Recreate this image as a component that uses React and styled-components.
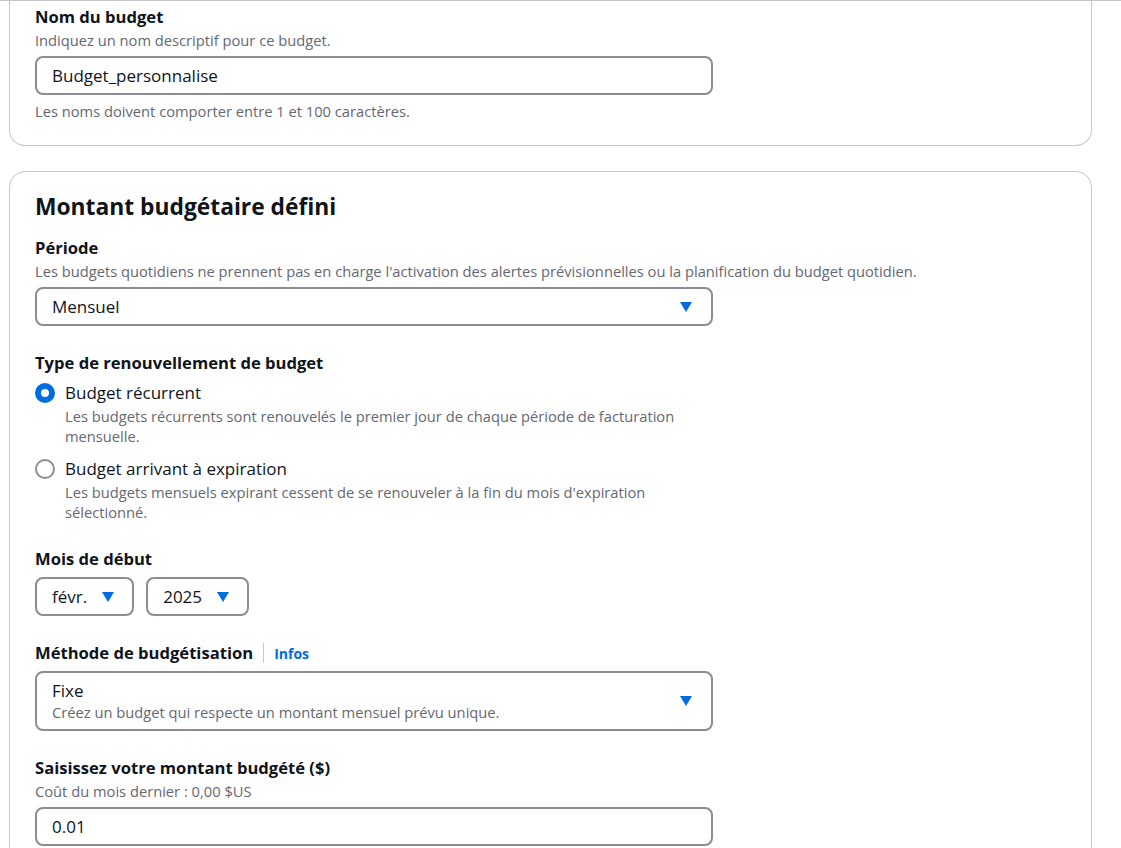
import React from "react";
import styled, { createGlobalStyle } from "styled-components";

const GlobalStyle = createGlobalStyle`
  html, body {
    margin: 0;
    padding: 0;
    background: #ffffff;
    font-family: "Open Sans", "Noto Sans", Arial, sans-serif;
    color: #0f141a;
    overflow: hidden;
  }
`;

export default function App() {
  return (
    <Page>
      <GlobalStyle />
      <Card $cut>
        <Field>
          <Label>Nom du budget</Label>
          <Description>Indiquez un nom descriptif pour ce budget.</Description>
          <Input defaultValue="Budget_personnalise" />
          <Hint>Les noms doivent comporter entre 1 et 100 caractères.</Hint>
        </Field>
      </Card>

      <Card>
        <Heading>Montant budgétaire défini</Heading>

        <Field>
          <Label>Période</Label>
          <Description>
            Les budgets quotidiens ne prennent pas en charge l'activation des alertes prévisionnelles ou la planification du budget quotidien.
          </Description>
          <Select>
            <span>Mensuel</span>
            <Caret />
          </Select>
        </Field>

        <Field>
          <Label>Type de renouvellement de budget</Label>
          <RadioGroup>
            <RadioItem>
              <Radio $checked />
              <div>
                <RadioLabel>Budget récurrent</RadioLabel>
                <RadioDesc>
                  Les budgets récurrents sont renouvelés le premier jour de chaque période de facturation mensuelle.
                </RadioDesc>
              </div>
            </RadioItem>
            <RadioItem>
              <Radio />
              <div>
                <RadioLabel>Budget arrivant à expiration</RadioLabel>
                <RadioDesc>
                  Les budgets mensuels expirant cessent de se renouveler à la fin du mois d'expiration sélectionné.
                </RadioDesc>
              </div>
            </RadioItem>
          </RadioGroup>
        </Field>

        <Field>
          <Label>Mois de début</Label>
          <SmallSelects>
            <Select $compact>
              <span>févr.</span>
              <Caret />
            </Select>
            <Select $compact>
              <span>2025</span>
              <Caret />
            </Select>
          </SmallSelects>
        </Field>

        <Field>
          <LabelRow>
            <Label>Méthode de budgétisation</Label>
            <Divider />
            <InfoLink>Infos</InfoLink>
          </LabelRow>
          <Select $tall>
            <div>
              <OptionTitle>Fixe</OptionTitle>
              <OptionDesc>Créez un budget qui respecte un montant mensuel prévu unique.</OptionDesc>
            </div>
            <Caret />
          </Select>
        </Field>

        <Field>
          <Label>Saisissez votre montant budgété ($)</Label>
          <Description>Coût du mois dernier : 0,00 $US</Description>
          <Input defaultValue="0.01" />
        </Field>
      </Card>
    </Page>
  );
}

function Caret() {
  return (
    <CaretIcon viewBox="0 0 14 12">
      <path d="M1 1h12L7 11z" fill="#006ce0" />
    </CaretIcon>
  );
}

const Page = styled.div`
  height: 848px;
  border-top: 1px solid #c6c6cd;
  box-sizing: border-box;
  padding: 0 29px 0 9px;
  display: flex;
  flex-direction: column;
  gap: 25px;
`;

const Card = styled.section`
  border: 1px solid #c6c6cd;
  border-radius: 16px;
  ${(p) => p.$cut && "border-top: none; border-top-left-radius: 0; border-top-right-radius: 0; margin-top: -1px;"}
  padding: ${(p) => (p.$cut ? "6px 25px 24px" : "20px 25px 20px")};
  display: flex;
  flex-direction: column;
  gap: 26px;
`;

const Heading = styled.h2`
  margin: 0 0 -11px;
  font-size: 22.8px;
  line-height: 30px;
  font-weight: 700;
`;

const Field = styled.div`
  display: flex;
  flex-direction: column;
`;

const Label = styled.label`
  font-size: 16.6px;
  line-height: 22px;
  font-weight: 700;
`;

const LabelRow = styled.div`
  display: flex;
  align-items: center;
  margin-bottom: 7px;
`;

const Divider = styled.span`
  width: 1px;
  height: 20px;
  background: #c6c6cd;
  margin: 0 10px;
`;

const InfoLink = styled.a`
  color: #006ce0;
  font-size: 14px;
  font-weight: 700;
`;

const Description = styled.div`
  font-size: 14.7px;
  line-height: 20px;
  color: #656871;
  margin: 2px 0 6px;
`;

const Hint = styled(Description)`
  margin: 6px 0 0;
`;

const Input = styled.input`
  width: 678px;
  height: 39px;
  box-sizing: border-box;
  border: 2px solid #8c8c94;
  border-radius: 8px;
  padding: 0 15px;
  font: inherit;
  font-size: 17px;
  color: #0f141a;
  outline: none;
`;

const Select = styled.div`
  width: ${(p) => (p.$compact ? "auto" : "678px")};
  align-self: flex-start;
  box-sizing: border-box;
  min-height: 39px;
  border: 2px solid #8c8c94;
  border-radius: 8px;
  padding: ${(p) => (p.$compact ? "0 17px 0 15px" : p.$tall ? "7px 18px 7px 15px" : "0 18px 0 15px")};
  display: flex;
  align-items: center;
  justify-content: space-between;
  gap: 14px;
  font-size: 17px;
`;

const OptionTitle = styled.div`
  line-height: 22px;
`;

const OptionDesc = styled.div`
  font-size: 14.7px;
  color: #656871;
  line-height: 20px;
`;

const CaretIcon = styled.svg`
  width: 14px;
  height: 12px;
  flex-shrink: 0;
`;

const SmallSelects = styled.div`
  display: flex;
  gap: 12px;
  margin-top: 7px;
`;

const RadioGroup = styled.div`
  display: flex;
  flex-direction: column;
  gap: 12px;
  margin-top: 8px;
`;

const RadioItem = styled.div`
  display: flex;
  gap: 10px;
  align-items: flex-start;
`;

const Radio = styled.span`
  width: 20px;
  height: 20px;
  box-sizing: border-box;
  border-radius: 50%;
  margin-top: 1px;
  flex-shrink: 0;
  border: ${(p) => (p.$checked ? "6px solid #006ce0" : "2px solid #8c8c94")};
  background: #fff;
`;

const RadioLabel = styled.div`
  font-size: 17px;
  line-height: 22px;
`;

const RadioDesc = styled.div`
  font-size: 14.7px;
  line-height: 20px;
  color: #656871;
  max-width: 648px;
  margin-top: 2px;
`;
